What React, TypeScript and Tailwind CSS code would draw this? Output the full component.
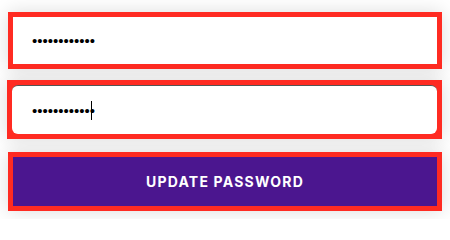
import { useState } from "react"

export default function App() {
  const [current, setCurrent] = useState("oldpassword1")
  const [next, setNext] = useState("newpassword1")

  return (
    <div className="min-h-[219px] w-[450px] bg-white pl-2 pr-2 pt-3 pb-2 font-['Liberation_Sans',Arial,sans-serif]">
      <div className="bg-[#ff2b22] p-[5px] shadow-[0_0_18px_rgba(0,0,0,0.14)]">
        <input
          type="password"
          value={current}
          onChange={(e) => setCurrent(e.target.value)}
          className="block h-[47px] w-full bg-white pl-[19px] text-[15px] text-black outline-none"
        />
      </div>

      <div className="relative mt-[11px] -ml-px bg-[#ff2b22] p-[5px] shadow-[0_0_18px_rgba(0,0,0,0.14)]">
        <input
          type="password"
          value={next}
          onChange={(e) => setNext(e.target.value)}
          className="block h-[49px] w-full rounded-[6px] border-t border-[#555] bg-white pl-5 text-[15px] text-black outline-none"
        />
        {/* text caret */}
        <span className="pointer-events-none absolute left-[84px] top-[21px] h-[19px] w-px bg-black" />
      </div>

      <div className="mt-[13px] bg-[#ff2b22] p-[5px] shadow-[0_0_18px_rgba(0,0,0,0.14)]">
        <button
          type="button"
          className="flex h-[49px] w-full items-center justify-center bg-[#4b168f] font-['Inter',sans-serif] text-[14px] font-bold tracking-[1.2px] text-white"
        >
          UPDATE PASSWORD
        </button>
      </div>
    </div>
  )
}
